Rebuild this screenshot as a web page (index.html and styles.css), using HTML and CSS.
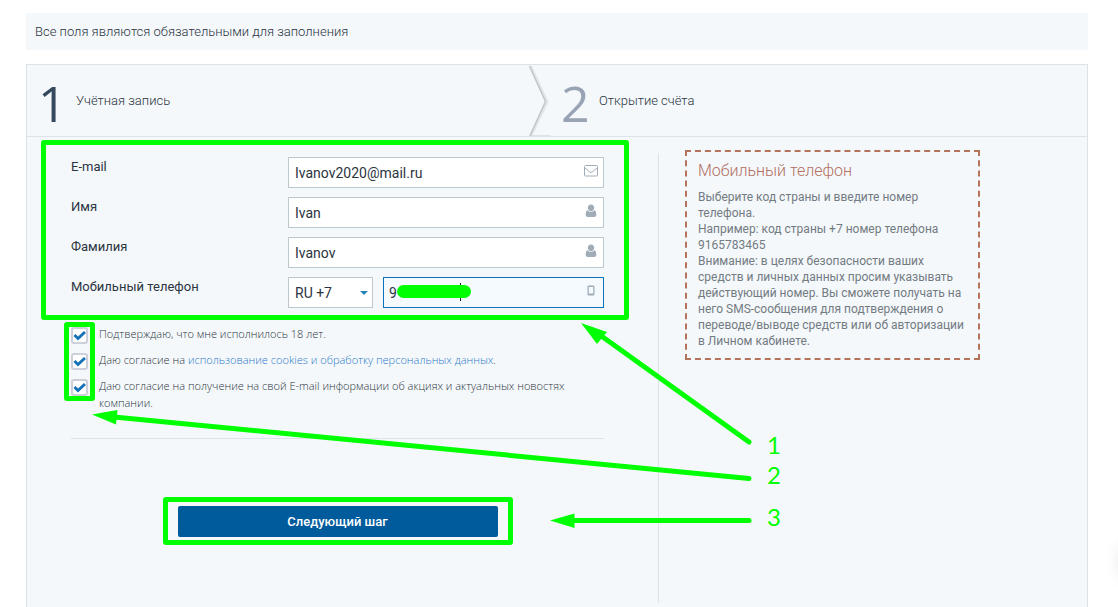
FILE: index.html
```html
<!DOCTYPE html>
<html lang="ru">
<head>
<meta charset="utf-8">
<title>Открытие счёта</title>
<link rel="stylesheet" href="styles.css">
</head>
<body>
<svg class="sprite" aria-hidden="true">
  <symbol id="user" viewBox="0 0 12 14"><path d="M6 0.5C7.800 0.500 9.200 1.900 9.200 3.800S7.800 7.200 6 7.200 2.800 5.700 2.800 3.800 4.200.5 6 .5ZM2.700 6.300C3.500 7.400 4.700 8 6 8s2.500-.6 3.300-1.700C10.900 6.800 11.300 8.500 11.300 10.800c0 1.300-.8 2.200-2 2.200H2.700c-1.200 0-2-.9-2-2.200C.7 8.500 1.100 6.800 2.700 6.300Z" fill="currentColor"/></symbol>
</svg>
<main class="page">
  <p class="notice">Все поля являются обязательными для заполнения</p>
  <section class="panel">
    <ol class="steps">
      <li class="step step-current"><span class="step-number">1</span><span class="step-name">Учётная запись</span></li>
      <li class="step"><span class="step-number">2</span><span class="step-name">Открытие счёта</span>
        <svg class="chevron" viewBox="0 0 22 72" aria-hidden="true"><path d="M1.500 1 18 37 1.500 71" fill="none" stroke="#e3e6e8" stroke-width="3"/><path d="M.5 1 16.500 36.500 1 71" fill="none" stroke="#c4c7ca" stroke-width="1.600"/><path d="M2 70.500H22" stroke="#dae3e7"/></svg>
      </li>
    </ol>
    <div class="columns">
      <form class="form">
        <div class="fields mark">
          <div class="row"><label for="email">E-mail</label><div class="control"><input id="email" type="email" value="Ivanov2020@mail.ru"><svg class="icon" viewBox="0 0 16 14" aria-hidden="true"><rect x="1.500" y="1.500" width="13" height="10.500" rx="1" fill="none" stroke="currentColor"/><path d="M2 4 6.800 8q1.200 1 2.400 0L14 4" fill="none" stroke="currentColor"/></svg></div></div>
          <div class="row"><label for="name">Имя</label><div class="control"><input id="name" type="text" value="Ivan"><svg class="icon" aria-hidden="true"><use href="#user"/></svg></div></div>
          <div class="row"><label for="surname">Фамилия</label><div class="control"><input id="surname" type="text" value="Ivanov"><svg class="icon" aria-hidden="true"><use href="#user"/></svg></div></div>
          <div class="row"><label for="phone">Мобильный телефон</label><div class="phone">
            <div class="control code"><select aria-label="Код страны"><option>RU +7</option></select><svg class="arrow" viewBox="0 0 8 4" aria-hidden="true"><path d="M0 0h8L4 4Z" fill="#2683b3"/></svg></div>
            <div class="control number"><input id="phone" type="tel" value="9"><span class="caret"></span><span class="redaction"></span><svg class="icon" viewBox="0 0 12 14" aria-hidden="true"><path fill="currentColor" fill-rule="evenodd" d="M3.500 1.500h5Q9.500 1.500 9.500 2.500v8Q9.500 11.500 8.500 11.500h-5Q2.500 11.500 2.500 10.500V2.500Q2.500 1.500 3.500 1.500ZM3.800 3v6.500h4.400V3Z"/></svg></div>
          </div></div>
        </div>
        <div class="checks">
          <div class="check"><input id="adult" type="checkbox" checked><label for="adult">Подтверждаю, что мне исполнилось 18 лет.</label></div>
          <div class="check"><input id="cookies" type="checkbox" checked><div><label for="cookies">Даю согласие на</label> <a href="#">использование cookies и обработку персональных данных</a>.</div></div>
          <div class="check"><input id="news" type="checkbox" checked><label for="news">Даю согласие на получение на свой E-mail информации об акциях и актуальных новостях<br>компании.</label></div>
          <span class="checks-mark"></span>
        </div>
        <div class="actions"><div class="submit mark"><button type="submit">Следующий шаг</button></div></div>
      </form>
      <div class="side">
        <aside class="help">
          <h2>Мобильный телефон</h2>
          <p>Выберите код страны и введите номер<br>телефона.<br>Например: код страны <b>+7</b> номер телефона<br><b>9165783465</b><br>Внимание: в целях безопасности ваших<br>средств и личных данных просим указывать<br>действующий номер. Вы сможете получать на<br>него SMS-сообщения для подтверждения о<br>переводе/выводе средств или об авторизации<br>в Личном кабинете.</p>
        </aside>
      </div>
    </div>
  </section>
  <svg class="annotations" width="1118" height="607" viewBox="0 0 1118 607">
    <g stroke="#0f0" stroke-width="5" stroke-linecap="round"><path d="M749 442 600 335"/><path d="M749 478.500 114 417"/><path d="M749 520.500H573"/></g>
    <g fill="#0f0"><path d="M581 323 607 332 597 344Z"/><path d="M92 414.500 117.500 410 116 424.500Z"/><path d="M550 520.500 574.500 513.500V528Z"/>
    <text x="767" y="454">1</text><text x="767" y="484">2</text><text x="767" y="526">3</text></g>
  </svg>
  <span class="widget-shadow"></span>
</main>
</body>
</html>
```
FILE: styles.css
```css
* { box-sizing: border-box; }
body { margin: 0; background: #fff; color: #2b3440; font: 13px/18px Roboto, "Noto Sans", sans-serif; }
.sprite { position: absolute; width: 0; height: 0; }
.page { position: relative; min-height: 100vh; display: flex; flex-direction: column; gap: 14px; padding: 13px 30px 0 26px; overflow: hidden; }
.notice { margin: 0; padding: 9px; background: #f4f8fb; line-height: 19px; font-weight: 300; }
.panel { flex: 1; display: flex; flex-direction: column; background: #f4f8fb; border: 1px solid #dae3e7; border-bottom: 0; }
.steps { display: grid; grid-template-columns: 502px 1fr; margin: 0; padding: 0; list-style: none; border-bottom: 1px solid #dae3e7; }
.step { position: relative; display: flex; align-items: center; gap: 11px; height: 71px; padding-left: 32px; font-weight: 300; }
.step-current { padding-left: 11px; }
.step-number { width: 27px; font: 400 50px/60px "Open Sans", sans-serif; color: #98a4b4; padding-top: 4px; }
.step-current .step-number { color: #34495e; }
.chevron { position: absolute; left: 0; top: 0; width: 22px; height: 72px; }
.columns { flex: 1; display: grid; grid-template-columns: 631px 1fr; padding: 16px 0 4px; }
.form { padding: 4px 54px 0 44px; }
.mark::after { content: ""; position: absolute; border: 5px solid #0f0; border-radius: 3px; pointer-events: none; }
.fields { position: relative; display: flex; flex-direction: column; gap: 9px; }
.fields::after { inset: -17px -25px -12px -30px; }
.row { display: grid; grid-template-columns: 217px 1fr; }
.row label { padding-top: 1px; }
.control { position: relative; display: flex; }
.control input, .control select { width: 100%; height: 31px; margin: 0; padding: 0 6px; border: 1px solid #bdc7ce; border-radius: 0; background: #fff; color: #2b3440; font: inherit; font-size: 14px; outline: 0; appearance: none; }
.phone { display: grid; grid-template-columns: 85px 1fr; gap: 10px; }
.control.number input { border-color: #0b72bd; background: #f5faff; padding-left: 5px; }
.icon { position: absolute; right: 5px; top: 7px; width: 16px; height: 14px; color: #a0adb8; }
.arrow { position: absolute; right: 5px; top: 14px; width: 8px; height: 4px; }
.redaction { position: absolute; left: 14px; top: 8px; width: 74px; height: 13px; border-radius: 7px; background: #0f0; }
.caret { position: absolute; left: 77px; top: 6px; width: 1px; height: 18px; background: #222; }
.checks { position: relative; display: flex; flex-direction: column; gap: 9px; margin-top: 17px; padding-bottom: 27px; border-bottom: 1px solid #dae3e7; font: 300 11px/17px "Open Sans", sans-serif; }
.check { display: grid; grid-template-columns: 17px 1fr; gap: 11px; align-items: start; }
.check input { appearance: none; width: 17px; height: 17px; margin: 2px 0 -2px; border: 2px solid #cbd0db; border-radius: 3px; background: #fff url("data:image/svg+xml,%3Csvg xmlns='http://www.w3.org/2000/svg' viewBox='0 0 13 13'%3E%3Cpath d='M1.500 6 5 9.500 12 3' fill='none' stroke='%231673b9' stroke-width='3'/%3E%3C/svg%3E") center / 13px 13px no-repeat; }
.checks-mark { position: absolute; left: -7px; top: -3px; width: 31px; height: 79px; border: 5px solid #0f0; border-radius: 3px; pointer-events: none; }
a { color: #2d78c8; text-decoration: none; }
.actions { display: flex; justify-content: center; padding-top: 67px; }
.submit { position: relative; width: 320px; }
.submit::after { inset: -9px -15px -8px; }
.submit button { display: block; width: 100%; height: 31px; padding: 0; border: 0; border-radius: 2px; background: #005b9c; color: #fff; font: 500 13px/18px Roboto, "Noto Sans", sans-serif; }
.side { border-left: 1px solid #dae3e7; padding-left: 26px; }
.help { width: 295px; margin-top: -3px; padding: 9px 11px; border: 2px dashed #b5735c; color: #737b82; font-size: 12px; line-height: 16px; white-space: nowrap; }
.help h2 { margin: 0 0 8px; color: #b3705f; font-size: 16px; line-height: 20px; font-weight: 300; }
.help p { margin: 0; }
.help b { font-weight: 400; }
.annotations { position: absolute; left: 0; top: 0; pointer-events: none; font: 24px Lato, sans-serif; }
.widget-shadow { position: absolute; left: 1120px; top: 542px; width: 40px; height: 40px; border-radius: 50%; box-shadow: 0 0 18px rgba(0, 0, 0, .12); }
```
